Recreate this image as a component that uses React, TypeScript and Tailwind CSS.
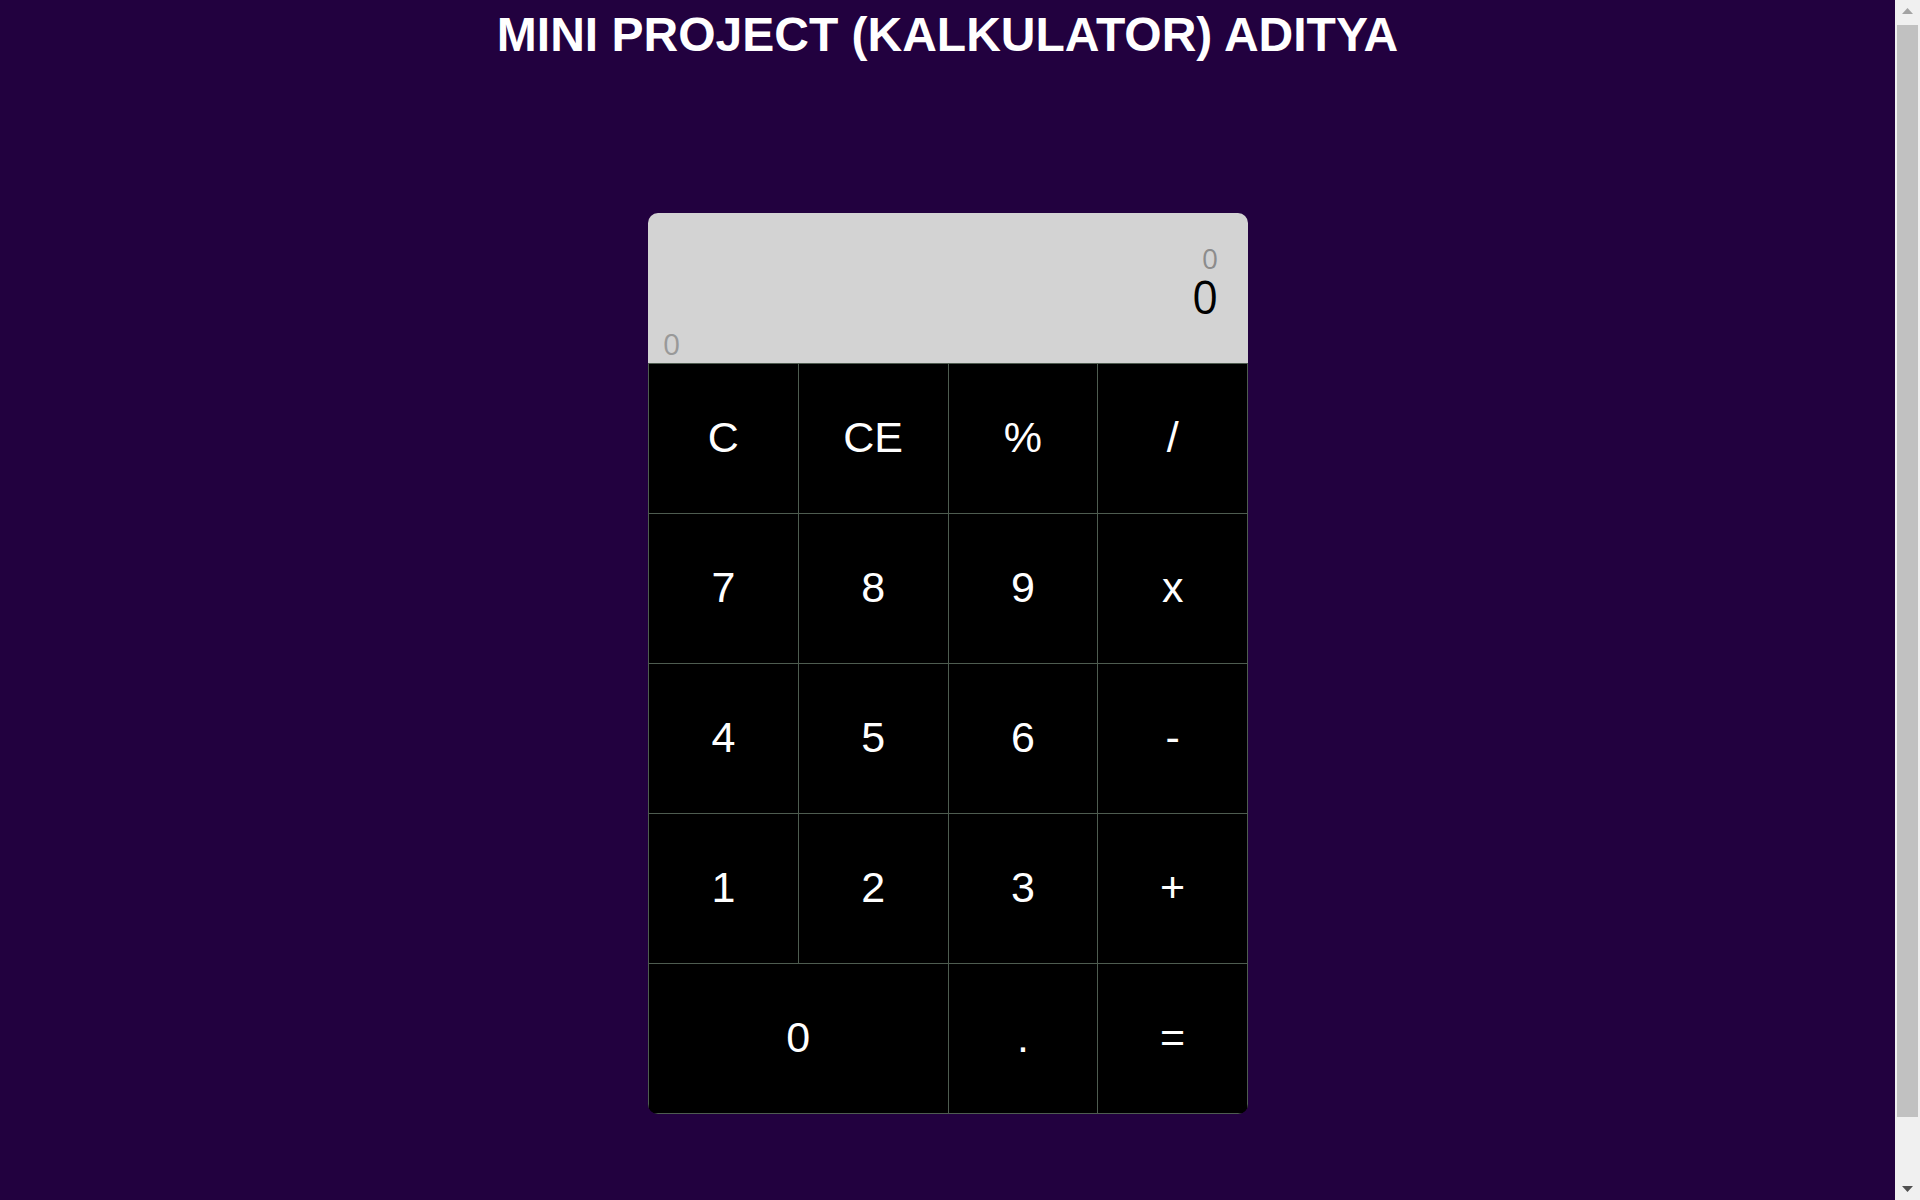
import React from 'react';

const keys: { label: string; wide?: boolean }[] = [
  { label: 'C' },
  { label: 'CE' },
  { label: '%' },
  { label: '/' },
  { label: '7' },
  { label: '8' },
  { label: '9' },
  { label: 'x' },
  { label: '4' },
  { label: '5' },
  { label: '6' },
  { label: '-' },
  { label: '1' },
  { label: '2' },
  { label: '3' },
  { label: '+' },
  { label: '0', wide: true },
  { label: '.' },
  { label: '=' },
];

const Scrollbar = () => (
  <div className="w-[25px] shrink-0 bg-[#f0f0f0] flex flex-col items-center">
    <div className="h-[22px] flex items-center justify-center">
      <svg width="11" height="6" viewBox="0 0 11 6">
        <path d="M0 6 L5.5 0 L11 6 Z" fill="#a3a3a3" />
      </svg>
    </div>
    <div className="mt-[3px] h-[1092px] w-[21px] bg-[#c1c1c1]" />
    <div className="flex-1" />
    <div className="h-[22px] flex items-center justify-center">
      <svg width="11" height="6" viewBox="0 0 11 6">
        <path d="M0 0 L11 0 L5.5 6 Z" fill="#505050" />
      </svg>
    </div>
  </div>
);

export default function App() {
  return (
    <div className="h-[1200px] flex overflow-hidden font-['Liberation_Sans',Arial,sans-serif]">
      <main className="flex-1 bg-[#22013f] flex flex-col items-center">
        <h1 className="mt-[7px] text-[48px] font-bold leading-[1.15] text-white">
          MINI PROJECT (KALKULATOR) ADITYA
        </h1>

        {/* Kalkulator */}
        <div className="mt-[151px] ml-[1px] w-[600px] rounded-[10px] overflow-hidden">
          <div className="h-[150px] bg-[#d3d3d3] flex flex-col pt-[31px] font-['Open_Sans',sans-serif]">
            <div className="flex flex-col items-end pr-[30px]">
              <span className="text-[28px] leading-none text-[#8c8c8c]">0</span>
              <span className="mt-[2px] text-[45px] leading-none text-black">0</span>
            </div>
            <span className="mt-[10px] pl-[15px] text-[30px] leading-none text-[#999999]">0</span>
          </div>

          <div className="grid grid-cols-4 border-l border-t border-[#4e5c50] bg-black">
            {keys.map((k) => (
              <button
                key={k.label}
                className={`h-[150px] border-r border-b border-[#4e5c50] bg-black text-white text-[43px] leading-none flex items-center justify-center pb-[2px] ${
                  k.wide ? 'col-span-2' : ''
                }`}
              >
                {k.label}
              </button>
            ))}
          </div>
        </div>
      </main>
      <Scrollbar />
    </div>
  );
}
